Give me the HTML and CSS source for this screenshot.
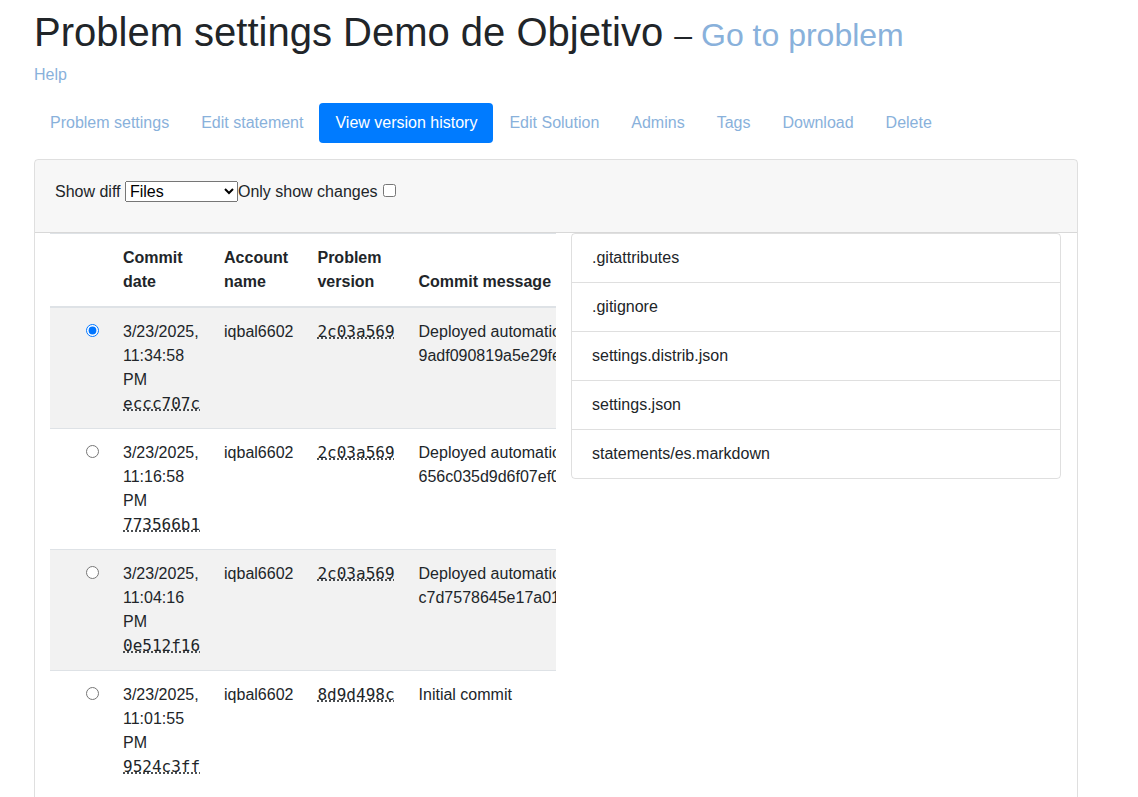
FILE: index.html
```html
<!DOCTYPE html>
<html lang="en">
<head>
<meta charset="utf-8">
<title>Problem settings</title>
<link rel="stylesheet" href="styles.css">
</head>
<body>
<div class="page">
  <h1 class="title">Problem settings Demo de Objetivo <small>– <a href="#">Go to problem</a></small></h1>
  <p class="help"><a href="#">Help</a></p>
  <ul class="nav">
    <li><a class="nav-link" href="#">Problem settings</a></li>
    <li><a class="nav-link" href="#">Edit statement</a></li>
    <li><a class="nav-link active" href="#">View version history</a></li>
    <li><a class="nav-link" href="#">Edit Solution</a></li>
    <li><a class="nav-link" href="#">Admins</a></li>
    <li><a class="nav-link" href="#">Tags</a></li>
    <li><a class="nav-link" href="#">Download</a></li>
    <li><a class="nav-link" href="#">Delete</a></li>
  </ul>
  <div class="card">
    <div class="card-header">
      <label>Show diff <select class="diff-select"><option>Files</option><option>Statements</option></select></label><label>Only show changes<input class="check" type="checkbox"></label>
    </div>
    <div class="card-body">
      <div class="col col-table">
        <table class="table">
          <thead>
            <tr>
              <th class="sel"></th>
              <th>Commit date</th>
              <th>Account name</th>
              <th>Problem version</th>
              <th>Commit message</th>
            </tr>
          </thead>
          <tbody>
            <tr>
              <td class="sel"><input type="radio" name="commit" checked></td>
              <td>3/23/2025, 11:34:58 PM <abbr title="eccc707c">eccc707c</abbr></td>
              <td>iqbal6602</td>
              <td><abbr title="2c03a569">2c03a569</abbr></td>
              <td>Deployed automation 9adf090819a5e29fe3b1c4d7a2f6e8b0c5d9a1e3</td>
            </tr>
            <tr>
              <td class="sel"><input type="radio" name="commit"></td>
              <td>3/23/2025, 11:16:58 PM <abbr title="773566b1">773566b1</abbr></td>
              <td>iqbal6602</td>
              <td><abbr title="2c03a569">2c03a569</abbr></td>
              <td>Deployed automation 656c035d9d6f07ef0a2b4c6d8e1f3a5b7c9d0e2f</td>
            </tr>
            <tr>
              <td class="sel"><input type="radio" name="commit"></td>
              <td>3/23/2025, 11:04:16 PM <abbr title="0e512f16">0e512f16</abbr></td>
              <td>iqbal6602</td>
              <td><abbr title="2c03a569">2c03a569</abbr></td>
              <td>Deployed automation c7d7578645e17a01b3c5d7e9f1a2b4c6d8e0f2a4</td>
            </tr>
            <tr>
              <td class="sel"><input type="radio" name="commit"></td>
              <td>3/23/2025, 11:01:55 PM <abbr title="9524c3ff">9524c3ff</abbr></td>
              <td>iqbal6602</td>
              <td><abbr title="8d9d498c">8d9d498c</abbr></td>
              <td>Initial commit</td>
            </tr>
          </tbody>
        </table>
      </div>
      <div class="col col-files">
        <ul class="list-group">
          <li class="list-item">.gitattributes</li>
          <li class="list-item">.gitignore</li>
          <li class="list-item">settings.distrib.json</li>
          <li class="list-item">settings.json</li>
          <li class="list-item">statements/es.markdown</li>
        </ul>
      </div>
    </div>
  </div>
</div>
</body>
</html>
```

FILE: styles.css
```css
* { box-sizing: border-box; }

html, body {
  margin: 0;
  background: #fff;
}

body {
  font-family: "Liberation Sans", Arial, sans-serif;
  font-size: 16px;
  line-height: 1.5;
  color: #212529;
}

a {
  color: #89b1db;
  text-decoration: none;
}

.page {
  padding: 8px 60px 0 34px;
}

.title {
  margin: 0 0 6.5px;
  font-size: 40px;
  font-weight: 400;
  line-height: 1.2;
}

.title small {
  font-size: 80%;
  font-weight: 400;
}

.help {
  margin: 0 0 16px;
}

.nav {
  display: flex;
  list-style: none;
  margin: 0 0 16px;
  padding: 0;
}

.nav-link {
  display: block;
  padding: 8px 16px;
  border-radius: 4px;
}

.nav-link.active {
  background: #007bff;
  color: #fff;
}

.card {
  border: 1px solid rgba(0, 0, 0, 0.125);
  border-radius: 4px;
  overflow: hidden;
}

.card-header {
  background: rgba(0, 0, 0, 0.03);
  border-bottom: 1px solid rgba(0, 0, 0, 0.125);
  padding: 20px 20px 28px;
}

.diff-select {
  width: 113px;
  font-family: "Liberation Sans", Arial, sans-serif;
  font-size: 16px;
  color: #000;
}

.check {
  margin: 3px 3px 3px 5px;
}

.card-body {
  display: grid;
  grid-template-columns: 1fr 1fr;
}

.col {
  padding: 0 15px;
  min-width: 0;
}

.col-table {
  overflow-x: auto;
  padding-bottom: 15px;
}

.col-table::-webkit-scrollbar {
  height: 15px;
  background: #f1f1f1;
}

.col-table::-webkit-scrollbar-thumb {
  background: #c1c1c1;
  border-top: 2px solid #f1f1f1;
  border-bottom: 2px solid #f1f1f1;
}

.col-files {
  padding: 0 16px 0 15px;
}

.table {
  width: 100%;
  border-collapse: collapse;
  margin: 0;
}

.table th,
.table td {
  padding: 12px;
  border-top: 1px solid #dee2e6;
  vertical-align: top;
  text-align: left;
}

.table thead th {
  vertical-align: bottom;
  border-bottom: 2px solid #dee2e6;
  font-weight: 700;
}

.table tbody tr:nth-child(odd) {
  background: rgba(0, 0, 0, 0.05);
}

.table .sel {
  width: 61px;
  padding-left: 36px;
}

.table .sel input {
  margin: 3px 0 0;
}

abbr {
  font-family: "DejaVu Sans Mono", monospace;
  text-decoration: underline dotted;
  cursor: help;
}

.list-group {
  list-style: none;
  margin: 0;
  padding: 0;
  border: 1px solid rgba(0, 0, 0, 0.125);
  border-radius: 4px;
}

.list-item {
  padding: 12px 20px;
}

.list-item + .list-item {
  border-top: 1px solid rgba(0, 0, 0, 0.125);
}
```
